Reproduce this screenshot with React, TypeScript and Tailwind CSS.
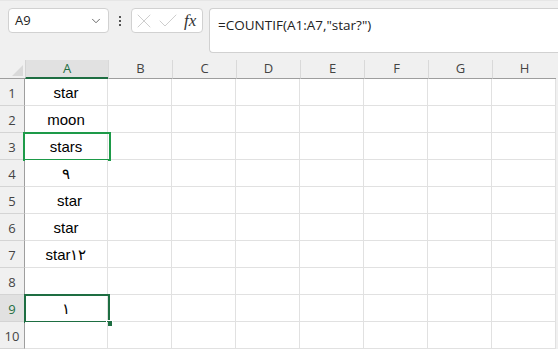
import { ChevronDown, X, Check } from "lucide-react";

const cols = ["A", "B", "C", "D", "E", "F", "G", "H"];

const cellValues: Record<number, string> = {
  1: "star",
  2: "moon",
  3: "stars",
  4: "٩",
  5: "star",
  6: "star",
  7: "star١٢",
  9: "١",
};

const App = () => {
  const rows = Array.from({ length: 10 }, (_, i) => i + 1);

  return (
    <div className="w-[558px] h-[349px] overflow-hidden bg-[#f0f0f0] font-['Liberation_Sans',sans-serif] select-none">
      {/* Formula bar */}
      <div className="h-[60px] flex items-start pt-[7px] pl-[8px] gap-[6px] border-t border-[#e6e6e6]">
        <div className="w-[101px] h-[25px] bg-white border border-[#d1d1d1] rounded-[4px] flex items-center justify-between pl-[6px] pr-[5px]">
          <span className="text-[13px] text-[#222] font-['Open_Sans',sans-serif]">A9</span>
          <ChevronDown className="w-[14px] h-[14px] text-[#555]" strokeWidth={1.5} />
        </div>
        <div className="w-[10px] h-[25px] flex flex-col items-center justify-center gap-[2px]">
          <span className="w-[2px] h-[2px] bg-[#555]" />
          <span className="w-[2px] h-[2px] bg-[#555]" />
          <span className="w-[2px] h-[2px] bg-[#555]" />
        </div>
        <div className="w-[72px] h-[25px] bg-white border border-[#d1d1d1] rounded-[4px] flex items-center">
          <X className="w-[24px] h-[24px] text-[#c8c8c8]" strokeWidth={0.9} />
          <Check className="w-[24px] h-[24px] text-[#c8c8c8]" strokeWidth={0.9} />
          <span className="ml-[4px] text-[17px] italic text-[#333] font-['Liberation_Serif',serif] leading-none">fx</span>
        </div>
        <div className="flex-1 h-[45px] bg-white border border-[#d1d1d1] rounded-l-[4px] border-r-0 pl-[8px] pt-[4px]">
          <span className="text-[13.5px] text-[#222] font-['Open_Sans',sans-serif]">=COUNTIF(A1:A7,"star?")</span>
        </div>
      </div>

      {/* Column headers */}
      <div className="flex h-[19px]">
        <div className="w-[25px] bg-[#f0f0f0] border-b border-[#9e9e9e] relative">
          <div className="absolute right-[2px] bottom-[2px] w-0 h-0 border-l-[11px] border-l-transparent border-b-[11px] border-b-[#d9d9d9]" />
        </div>
        {cols.map((c) => (
          <div
            key={c}
            className={
              c === "A"
                ? "w-[83px] shrink-0 bg-[#e1e1e1] border-b-2 border-[#1e6e42] border-l border-l-[#d4d4d4] flex items-center justify-center text-[13px] text-[#1e6e42] font-['Open_Sans',sans-serif]"
                : "w-[64px] shrink-0 bg-[#f0f0f0] border-b border-[#9e9e9e] border-l border-l-[#d9d9d9] flex items-center justify-center text-[13px] text-[#444] font-['Open_Sans',sans-serif]"
            }
          >
            {c}
          </div>
        ))}
      </div>

      {/* Rows */}
      {rows.map((r) => (
        <div key={r} className="flex h-[27px]">
          <div
            className={
              r === 9
                ? "w-[25px] shrink-0 bg-[#e1e1e1] border-b border-[#d4d4d4] border-r border-r-[#9e9e9e] flex items-end justify-center pb-[2px] text-[13px] text-[#1e6e42] font-['Open_Sans',sans-serif]"
                : "w-[25px] shrink-0 bg-[#f0f0f0] border-b border-[#d4d4d4] border-r border-r-[#9e9e9e] flex items-end justify-center pb-[2px] text-[13px] text-[#444] font-['Open_Sans',sans-serif]"
            }
          >
            {r}
          </div>
          {cols.map((c) => (
            <div
              key={c}
              className={
                c === "A"
                  ? "w-[83px] shrink-0 bg-white border-b border-r border-[#e1e1e1] relative flex items-center justify-center pt-[2px]"
                  : "w-[64px] shrink-0 bg-white border-b border-r border-[#e1e1e1]"
              }
            >
              {c === "A" && (
                <span className={r === 5 ? "pl-[7px] text-[15px] text-black" : "text-[15px] text-black"}>
                  {cellValues[r] ?? ""}
                </span>
              )}
              {c === "A" && r === 3 && (
                <div className="absolute -left-[2px] -top-[1px] w-[88px] h-[29px] border-2 border-[#1d9a48]" />
              )}
              {c === "A" && r === 9 && (
                <>
                  <div className="absolute -left-[1px] -top-[1px] w-[86px] h-[29px] border-2 border-[#1e6e42]" />
                  <div className="absolute left-[81px] top-[25px] w-[5px] h-[5px] bg-[#1e6e42] border border-white box-content" />
                </>
              )}
            </div>
          ))}
        </div>
      ))}
    </div>
  );
};

export default App;
